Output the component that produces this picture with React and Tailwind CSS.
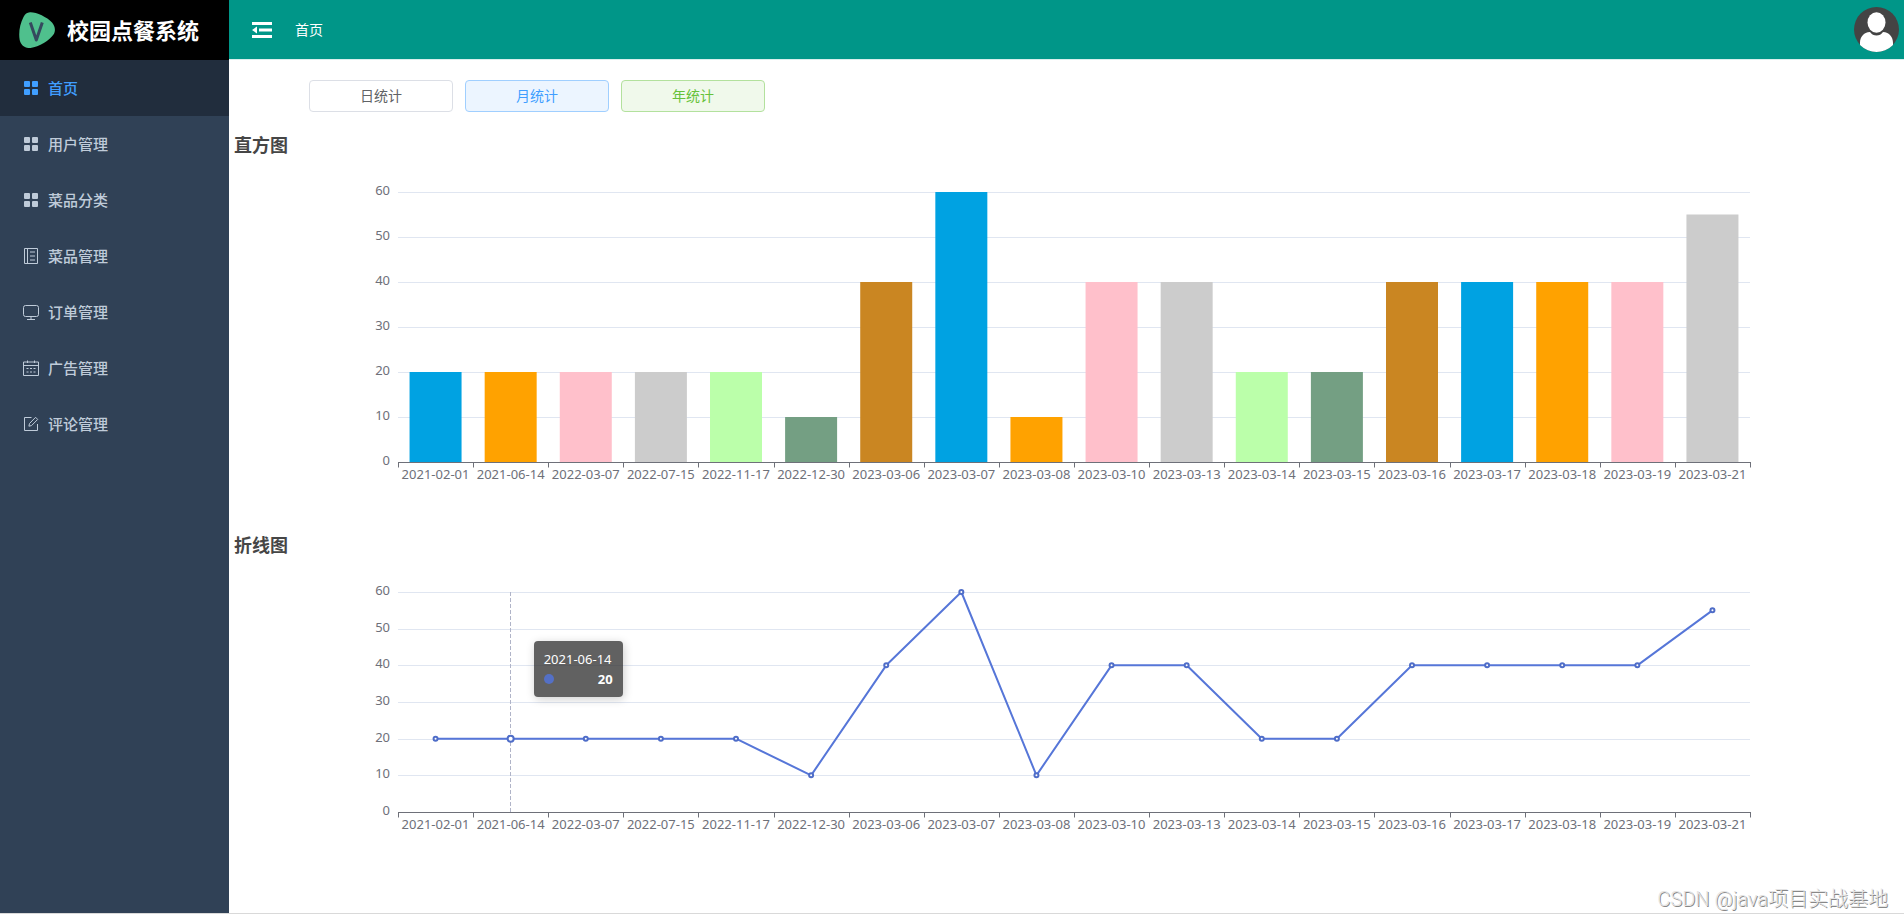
import React from 'react';

const menuItems = [
  { label: '首页', icon: 'grid', active: true },
  { label: '用户管理', icon: 'grid' },
  { label: '菜品分类', icon: 'grid' },
  { label: '菜品管理', icon: 'notebook' },
  { label: '订单管理', icon: 'monitor' },
  { label: '广告管理', icon: 'date' },
  { label: '评论管理', icon: 'edit' },
];

const stats = [
  { date: '2021-02-01', value: 20 },
  { date: '2021-06-14', value: 20 },
  { date: '2022-03-07', value: 20 },
  { date: '2022-07-15', value: 20 },
  { date: '2022-11-17', value: 20 },
  { date: '2022-12-30', value: 10 },
  { date: '2023-03-06', value: 40 },
  { date: '2023-03-07', value: 60 },
  { date: '2023-03-08', value: 10 },
  { date: '2023-03-10', value: 40 },
  { date: '2023-03-13', value: 40 },
  { date: '2023-03-14', value: 20 },
  { date: '2023-03-15', value: 20 },
  { date: '2023-03-16', value: 40 },
  { date: '2023-03-17', value: 40 },
  { date: '2023-03-18', value: 40 },
  { date: '2023-03-19', value: 40 },
  { date: '2023-03-21', value: 55 },
];

const barColors = ['#00a2e2', '#ffa200', '#ffc0cb', '#cccccc', '#bbffaa', '#749f83', '#ca8622'];

// chart geometry, in svg units
const WIDTH = 1675;
const LEFT = 169;
const RIGHT = 1521;
const TOP = 34;
const BOTTOM = 60;
const MAX = 60;
const BAR_WIDTH = 52;
const BAND = (RIGHT - LEFT) / stats.length;

const centerOf = (index) => LEFT + BAND * (index + 0.5);

const MenuIcon = ({ name }) => (
  <svg viewBox="0 0 16 16" fill="none" stroke="currentColor" strokeWidth="1" className="w-4 h-4 shrink-0" aria-hidden="true">
    {name === 'grid' && (
      <g fill="currentColor" stroke="none">
        <rect x="1" y="1" width="6" height="6" rx="1" />
        <rect x="9" y="1" width="6" height="6" rx="1" />
        <rect x="1" y="9" width="6" height="6" rx="1" />
        <rect x="9" y="9" width="6" height="6" rx="1" />
      </g>
    )}
    {name === 'notebook' && (
      <path d="M1.5 .5h13v15h-13zM4.5 .5v15M7 4h5M7 8h5M7 12h5" />
    )}
    {name === 'monitor' && (
      <>
        <rect x=".5" y="1.5" width="15" height="11" rx="2" />
        <path d="M8 12.5v3M4 15.5h8" />
      </>
    )}
    {name === 'date' && (
      <>
        <path d="M.5 2h15v13.500h-15zM.5 5.500h15M4.500 .5v2.500M11.500 .5v2.500" />
        <path d="M3.500 8.500h2M7 8.500h2M10.500 8.500h2M3.500 12h2M7 12h2M10.500 12h2" />
      </>
    )}
    {name === 'edit' && (
      <>
        <path d="M8.500 1.500h-7v13h13v-6.500" />
        <path d="M12.600 1.300l2.100 2.100-6.200 6.200-2.600.6.600-2.700z" strokeLinejoin="round" />
      </>
    )}
  </svg>
);

const Sidebar = () => {
  return (
    <aside className="flex flex-col shrink-0 w-[229px] bg-[#304156]">
      <div className="flex items-center h-15 pl-[19px] gap-3 bg-black">
        <svg viewBox="0 0 36 36" className="w-9 h-9 shrink-0" aria-hidden="true">
          <path d="M11 .3C17 0 28 5 33 10.500c3 3.500 4 8 1.500 12C31 28 20 35 11.500 36 6 36.400 2 33.500.7 28-.6 21 .8 12 4.500 5 6 2 8 .6 11 .3z" fill="#4fc08d" />
          <path d="M11.300 10.500l6 17.500 6-17.500" fill="none" stroke="#35495e" strokeWidth="3" strokeLinejoin="round" />
        </svg>
        <h1 className="text-[22px] leading-none font-bold text-white whitespace-nowrap">校园点餐系统</h1>
      </div>
      <nav className="flex flex-col">
        {menuItems.map((item) => (
          <a
            key={item.label}
            href="#"
            className={`flex items-center h-14 pl-[23px] gap-[9px] text-[15px] font-medium ${item.active ? 'bg-[#212d3d] text-[#409eff]' : 'text-[#bfcbd9]'}`}
          >
            <MenuIcon name={item.icon} />
            <span>{item.label}</span>
          </a>
        ))}
      </nav>
    </aside>
  );
};

const Header = () => {
  return (
    <header className="flex items-center justify-between h-15 pl-[23px] pr-[5px] bg-[#009688] border-b border-[#d8efed]">
      <div className="flex items-center gap-[23px]">
        <button type="button" aria-label="折叠菜单" className="cursor-pointer">
          <svg viewBox="0 0 20 16" className="w-5 h-4" fill="#fff">
            <path d="M0 0h20v3H0zM7 6.600h13v3H7zM0 13h20v3H0zM0 8l5-3.500v7z" />
          </svg>
        </button>
        <a href="#" className="text-sm text-white">首页</a>
      </div>
      <button type="button" aria-label="个人中心" className="cursor-pointer">
        <svg viewBox="0 0 45 45" className="w-[45px] h-[45px]">
          <defs>
            <clipPath id="avatar">
              <circle cx="22.500" cy="22.500" r="22.500" />
            </clipPath>
          </defs>
          <g clipPath="url(#avatar)">
            <rect width="45" height="45" fill="#444" />
            <path d="M6 45V36c0-6 3.500-10.500 10-11 1.500 2.500 4 3.500 6.500 3.500s5-1 6.500-3.500c6.500.5 10 5 10 11v9z" fill="#fff" />
            <ellipse cx="22.500" cy="15.500" rx="9" ry="10.300" fill="#fff" />
          </g>
        </svg>
      </button>
    </header>
  );
};

const Axes = ({ plotHeight }) => {
  const ticks = [0, 10, 20, 30, 40, 50, 60];
  const base = TOP + plotHeight;

  return (
    <g>
      {ticks.map((tick) => {
        const y = Math.round(base - (tick / MAX) * plotHeight);
        return (
          <g key={tick}>
            {tick > 0 && <path d={`M${LEFT} ${y + 0.5}H${RIGHT}`} stroke="#e0e6f1" />}
            <text x={LEFT - 8} y={y + 3} textAnchor="end" fontSize="13" fill="#6e7079">{tick}</text>
          </g>
        );
      })}
      {stats.map((item, index) => (
        <text key={item.date} x={centerOf(index)} y={base + 17} textAnchor="middle" fontSize="13" fill="#6e7079">{item.date}</text>
      ))}
    </g>
  );
};

const BaseLine = ({ plotHeight }) => {
  const base = TOP + plotHeight + 0.5;
  return (
    <g stroke="#6e7079">
      <path d={`M${LEFT} ${base}H${RIGHT + 1}`} />
      {Array.from({ length: stats.length + 1 }, (_, i) => (
        <path key={i} d={`M${Math.round(LEFT + BAND * i) + 0.5} ${base}v5`} />
      ))}
    </g>
  );
};

const BarChart = () => {
  const plotHeight = 270;
  const base = TOP + plotHeight;

  return (
    <section className="mb-[10px]">
      <h2 className="px-[5px] text-lg leading-[26px] font-bold text-[#464646]">直方图</h2>
      <svg viewBox={`0 0 ${WIDTH} ${base + BOTTOM}`} className="block w-full h-auto" role="img" aria-label="直方图">
        <Axes plotHeight={plotHeight} />
        {stats.map((item, index) => {
          const height = (item.value / MAX) * plotHeight;
          return (
            <rect
              key={item.date}
              x={centerOf(index) - BAR_WIDTH / 2}
              y={base - height}
              width={BAR_WIDTH}
              height={height}
              fill={barColors[index % barColors.length]}
            />
          );
        })}
        <BaseLine plotHeight={plotHeight} />
      </svg>
    </section>
  );
};

const LineChart = () => {
  const plotHeight = 220;
  const base = TOP + plotHeight;
  const height = base + BOTTOM;
  const hovered = 1;
  const points = stats.map((item, index) => [centerOf(index), base - (item.value / MAX) * plotHeight]);

  return (
    <section>
      <h2 className="px-[5px] text-lg leading-[26px] font-bold text-[#464646]">折线图</h2>
      <div className="relative">
        <svg viewBox={`0 0 ${WIDTH} ${height}`} className="block w-full h-auto" role="img" aria-label="折线图">
          <Axes plotHeight={plotHeight} />
          <BaseLine plotHeight={plotHeight} />
          <path d={`M${Math.round(centerOf(hovered)) - 0.5} ${TOP}V${base}`} stroke="#b0b4c8" strokeDasharray="4 2" />
          <polyline points={points.map((p) => p.join(',')).join(' ')} fill="none" stroke="#5676d8" strokeWidth="2" strokeLinejoin="bevel" />
          {points.map(([x, y], index) => (
            <circle key={index} cx={x} cy={y} r={index === hovered ? 3 : 2} fill="#fff" stroke="#4f6dc8" strokeWidth="2" />
          ))}
        </svg>
        <div
          className="absolute w-[89px] h-14 px-[10px] py-2 rounded bg-[rgba(50,50,50,0.77)] shadow-[1px_2px_10px_rgba(0,0,0,0.2)] text-[13px] text-white"
          style={{ left: `${((centerOf(hovered) + 23) / WIDTH) * 100}%`, top: `${(83 / height) * 100}%` }}
        >
          <p className="leading-5">{stats[hovered].date}</p>
          <p className="flex items-center justify-between leading-5 font-bold">
            <span className="w-[10px] h-[10px] rounded-full bg-[#5470c6]"></span>
            <span>{stats[hovered].value}</span>
          </p>
        </div>
      </div>
    </section>
  );
};

const App = () => {
  return (
    <div className="min-h-screen flex flex-col pb-1 bg-white font-['Noto_Sans','Noto_Sans_CJK_SC',sans-serif]">
      <div className="flex flex-1 border-b border-[#d9d9d9]">
        <Sidebar />
        <div className="flex flex-col flex-1 min-w-0">
          <Header />
          <main className="relative flex-1 pt-5">
            <div className="flex gap-3 pl-20 mb-5">
              <button type="button" className="w-36 h-8 rounded border border-[#dcdfe6] bg-white text-sm text-[#606266] cursor-pointer">日统计</button>
              <button type="button" className="w-36 h-8 rounded border border-[#a0cfff] bg-[#ecf5ff] text-sm text-[#409eff] cursor-pointer">月统计</button>
              <button type="button" className="w-36 h-8 rounded border border-[#b3e19d] bg-[#f0f9eb] text-sm text-[#67c23a] cursor-pointer">年统计</button>
            </div>
            <BarChart />
            <LineChart />
            <p className="absolute right-4 bottom-0 text-xl font-light font-[Roboto,'Noto_Sans_CJK_SC',sans-serif] text-[#e4e4e4] [text-shadow:1px_1px_0_#888]">CSDN @java项目实战基地</p>
          </main>
        </div>
      </div>
    </div>
  );
};

export default App;
